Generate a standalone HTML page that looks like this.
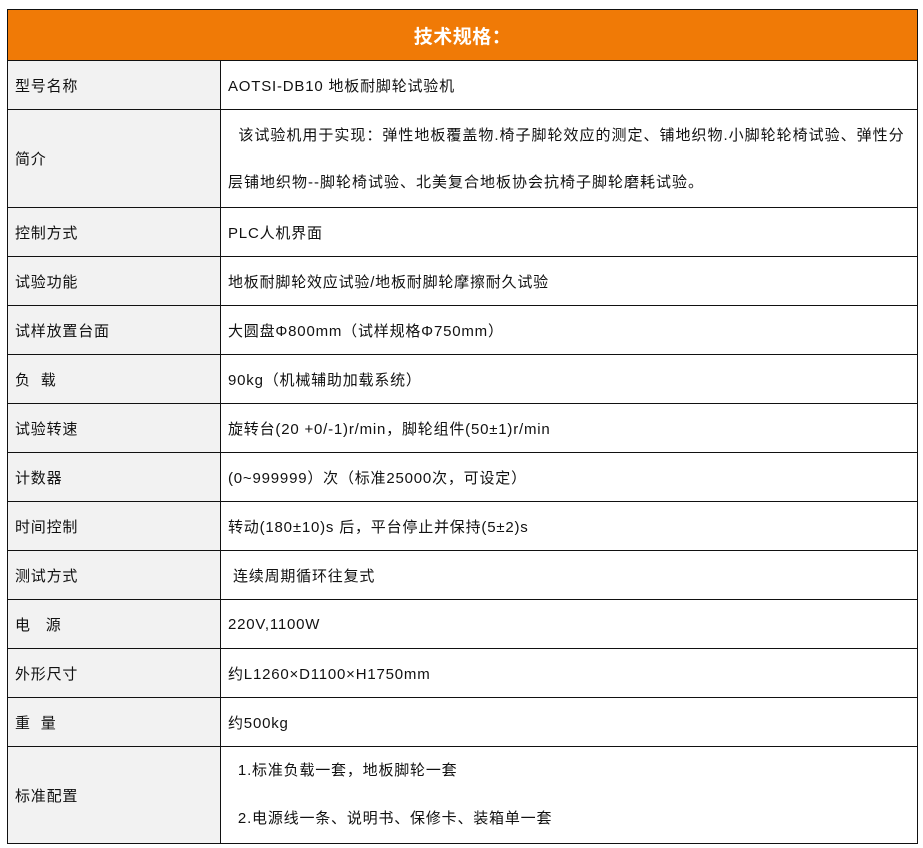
<!DOCTYPE html>
<html><head><meta charset="utf-8"><style>
body{margin:0;background:#fff;width:923px;height:848px;overflow:hidden;font-family:"Liberation Sans","Noto Sans CJK SC",sans-serif;font-size:15px;color:#111}
table{position:absolute;left:7px;top:9px;border-collapse:collapse;width:910px;table-layout:fixed}
td{border:1.5px solid #111;padding:0 7px;vertical-align:middle;white-space:nowrap;overflow:hidden;letter-spacing:0.8px}
td.l{background:#f2f2f2}
td.h{background:#f07a06;color:#fff;font-weight:bold;font-size:19px;text-align:center;height:50px;letter-spacing:0.5px}
</style></head><body>
<table>
<colgroup><col style="width:213px"><col style="width:697px"></colgroup>
<tr><td class="h" colspan="2">技术规格：</td></tr>
<tr style="height:49px"><td class="l">型号名称</td><td>AOTSI-DB10 地板耐脚轮试验机</td></tr>
<tr style="height:98px"><td class="l">简介</td><td style="line-height:47px;letter-spacing:1px">&nbsp;&nbsp;该试验机用于实现：弹性地板覆盖物.椅子脚轮效应的测定、铺地织物.小脚轮轮椅试验、弹性分<br>层铺地织物--脚轮椅试验、北美复合地板协会抗椅子脚轮磨耗试验。</td></tr>
<tr style="height:49px"><td class="l">控制方式</td><td>PLC人机界面</td></tr>
<tr style="height:49px"><td class="l">试验功能</td><td>地板耐脚轮效应试验/地板耐脚轮摩擦耐久试验</td></tr>
<tr style="height:49px"><td class="l">试样放置台面</td><td>大圆盘Φ800mm（试样规格Φ750mm）</td></tr>
<tr style="height:49px"><td class="l">负&nbsp;&nbsp;载</td><td>90kg（机械辅助加载系统）</td></tr>
<tr style="height:49px"><td class="l">试验转速</td><td>旋转台(20 +0/-1)r/min，脚轮组件(50±1)r/min</td></tr>
<tr style="height:49px"><td class="l">计数器</td><td>(0~999999）次（标准25000次，可设定）</td></tr>
<tr style="height:49px"><td class="l">时间控制</td><td>转动(180±10)s 后，平台停止并保持(5±2)s</td></tr>
<tr style="height:49px"><td class="l">测试方式</td><td>&nbsp;连续周期循环往复式</td></tr>
<tr style="height:49px"><td class="l">电&nbsp;&nbsp;&nbsp;源</td><td>220V,1100W</td></tr>
<tr style="height:49px"><td class="l">外形尺寸</td><td>约L1260×D1100×H1750mm</td></tr>
<tr style="height:49px"><td class="l">重&nbsp;&nbsp;量</td><td>约500kg</td></tr>
<tr style="height:96px"><td class="l">标准配置</td><td style="line-height:48px">&nbsp;&nbsp;1.标准负载一套，地板脚轮一套<br>&nbsp;&nbsp;2.电源线一条、说明书、保修卡、装箱单一套</td></tr>
</table>
</body></html>
